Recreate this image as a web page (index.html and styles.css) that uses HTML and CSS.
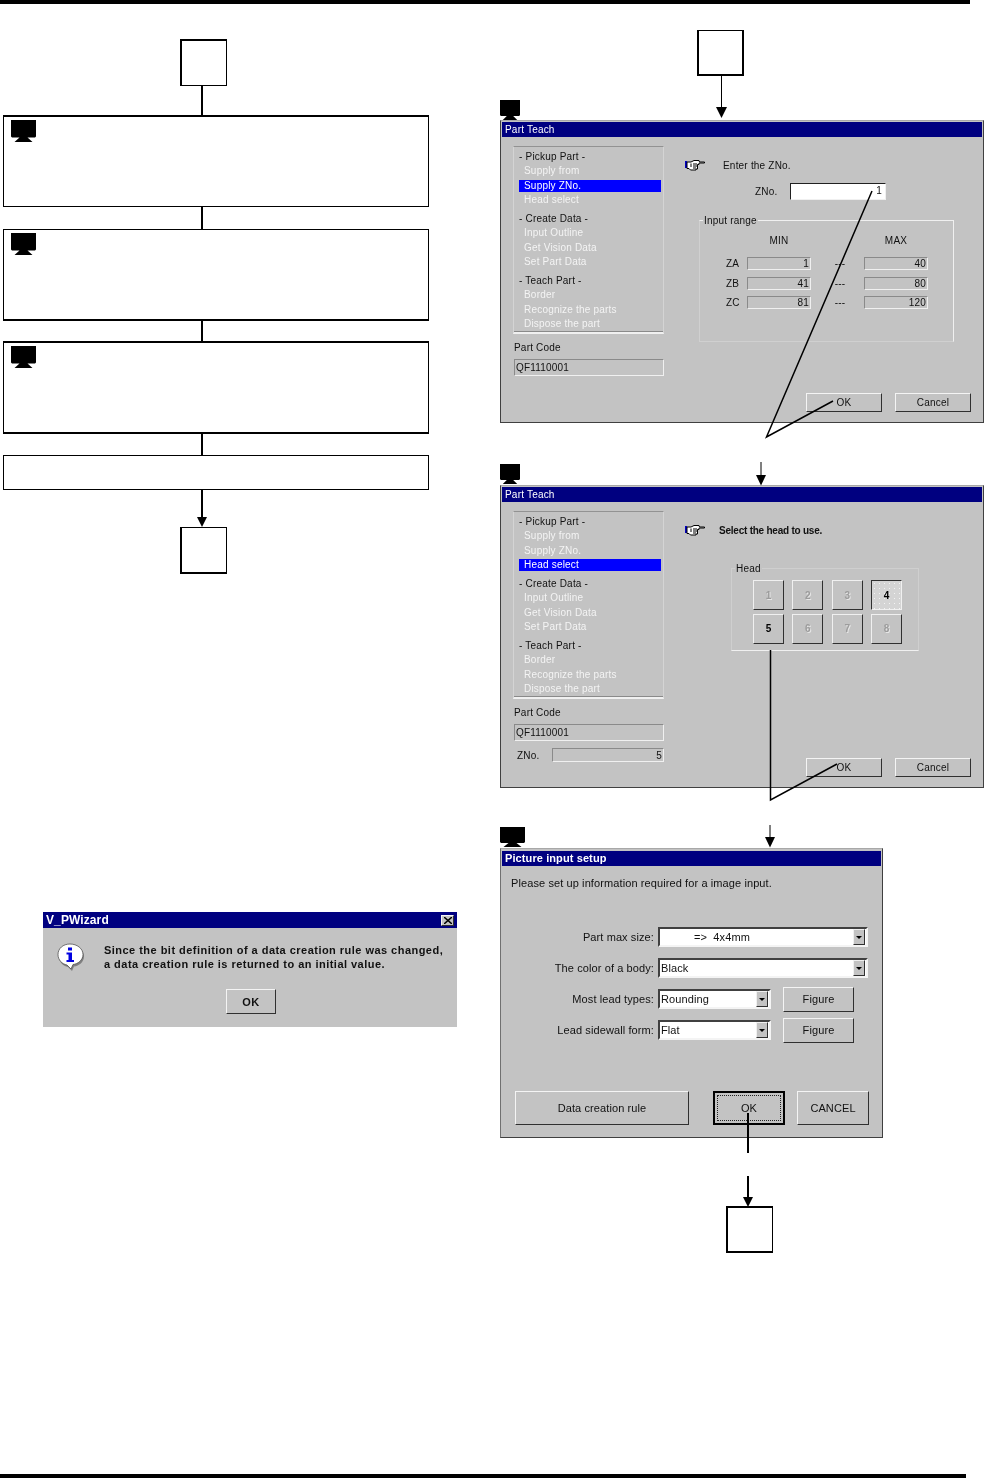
FILE: index.html
```html
<!DOCTYPE html>
<html lang="en">
<head>
  <meta charset="UTF-8" />
  <title>Part Teach flow</title>
  <link rel="stylesheet" href="styles.css">
</head>
<body>
<svg class="defs" width="0" height="0">
  <symbol id="monitor" viewBox="0 0 25 22" preserveAspectRatio="none">
    <path d="M0 0H25V16.5L24 17.5H16.5L21.5 22H3.5L8.5 17.5H1L0 16.5Z"/>
  </symbol>
  <symbol id="hand" viewBox="0 0 20 11">
    <rect x="0" y="1" width="2" height="7" fill="#0000c0"/>
    <path d="M2 2H6L9 0.5H14L14.5 2H19.5V3H14V4.5H12.5V9H11V10H5.5L4 8.5H2Z" fill="#fff" stroke="#000" stroke-width="1"/>
    <path d="M6 3.5V7M8 4H12M8 6H12M8 8H11" fill="none" stroke="#000" stroke-width="1"/>
  </symbol>
  <symbol id="info" viewBox="0 0 28 28">
    <path d="M14 3C21 3 27 7.500 27 13.500C27 19 22 23 17 23.500L15 28L11 24C6 23 2 19 2 13.500C2 7.500 7 3 14 3Z" fill="#808080"/>
    <path d="M13 1C20 1 26 5.500 26 11.500C26 17 21 21 16 21.500L14 26L10 22C5 21 1 17 1 11.500C1 5.500 6 1 13 1Z" fill="#fff" stroke="#404040" stroke-width=".7"/>
    <rect x="11" y="4.500" width="4" height="3" fill="#0000e0"/>
    <path d="M9.500 9.500H15V17H17V19H9.500V17H11.500V11.500H9.500Z" fill="#0000e0"/>
  </symbol>
</svg>

<div class="page">
  <div class="rule rule-top"></div>

  <!-- left flow chart -->
  <div class="node node-a"></div>
  <div class="step step-1"><svg class="monitor"><use href="#monitor"/></svg></div>
  <div class="step step-2"><svg class="monitor"><use href="#monitor"/></svg></div>
  <div class="step step-3"><svg class="monitor"><use href="#monitor"/></svg></div>
  <div class="step step-4"></div>
  <div class="node node-b"></div>

  <!-- message box -->
  <div class="window msgbox">
    <div class="titlebar msgbox-title">
      <span>V_PWizard</span>
      <span class="close"><svg width="8" height="7" viewBox="0 0 8 7"><path d="M0 0L8 7M8 0L0 7" stroke="#000" stroke-width="1.500"/></svg></span>
    </div>
    <div class="msgbox-row">
      <svg class="info-icon"><use href="#info"/></svg>
      <p class="msgbox-text">Since the bit definition of a data creation rule was changed,<br>a data creation rule is returned to an initial value.</p>
    </div>
    <button class="btn msgbox-ok">OK</button>
  </div>

  <!-- right column -->
  <div class="node node-c"></div>
  <svg class="monitor monitor-1"><use href="#monitor"/></svg>

  <div class="window teach teach-1">
    <div class="titlebar">Part Teach</div>
    <div class="teach-main">
      <div class="teach-left">
        <div class="steps">
          <div class="steps-group">
            <div class="steps-head">- Pickup Part -</div>
            <div class="steps-item">Supply from</div>
            <div class="steps-item sel">Supply ZNo.</div>
            <div class="steps-item">Head select</div>
          </div>
          <div class="steps-group">
            <div class="steps-head">- Create Data -</div>
            <div class="steps-item">Input Outline</div>
            <div class="steps-item">Get Vision Data</div>
            <div class="steps-item">Set Part Data</div>
          </div>
          <div class="steps-group">
            <div class="steps-head">- Teach Part -</div>
            <div class="steps-item">Border</div>
            <div class="steps-item">Recognize the parts</div>
            <div class="steps-item">Dispose the part</div>
          </div>
        </div>
        <div class="code-label">Part Code</div>
        <div class="field code-field">QF1110001</div>
      </div>
      <div class="teach-right">
        <div class="prompt">
          <svg class="hand"><use href="#hand"/></svg>
          <span>Enter the ZNo.</span>
        </div>
        <div class="zno-row">
          <span class="zno-label">ZNo.</span>
          <div class="zno-input">1</div>
        </div>
        <div class="range">
          <span class="legend">Input range</span>
          <div class="range-grid">
            <span></span><span class="range-head">MIN</span><span></span><span class="range-head">MAX</span>
            <span>ZA</span><div class="field num">1</div><span class="dash">---</span><div class="field num">40</div>
            <span>ZB</span><div class="field num">41</div><span class="dash">---</span><div class="field num">80</div>
            <span>ZC</span><div class="field num">81</div><span class="dash">---</span><div class="field num">120</div>
          </div>
        </div>
        <div class="teach-buttons">
          <button class="btn">OK</button>
          <button class="btn">Cancel</button>
        </div>
      </div>
    </div>
  </div>

  <svg class="monitor monitor-2"><use href="#monitor"/></svg>

  <div class="window teach teach-2">
    <div class="titlebar">Part Teach</div>
    <div class="teach-main">
      <div class="teach-left">
        <div class="steps">
          <div class="steps-group">
            <div class="steps-head">- Pickup Part -</div>
            <div class="steps-item">Supply from</div>
            <div class="steps-item">Supply ZNo.</div>
            <div class="steps-item sel">Head select</div>
          </div>
          <div class="steps-group">
            <div class="steps-head">- Create Data -</div>
            <div class="steps-item">Input Outline</div>
            <div class="steps-item">Get Vision Data</div>
            <div class="steps-item">Set Part Data</div>
          </div>
          <div class="steps-group">
            <div class="steps-head">- Teach Part -</div>
            <div class="steps-item">Border</div>
            <div class="steps-item">Recognize the parts</div>
            <div class="steps-item">Dispose the part</div>
          </div>
        </div>
        <div class="code-label">Part Code</div>
        <div class="field code-field">QF1110001</div>
        <div class="zno-summary">
          <span>ZNo.</span>
          <div class="field num zno-value">5</div>
        </div>
      </div>
      <div class="teach-right">
        <div class="prompt prompt-bold">
          <svg class="hand"><use href="#hand"/></svg>
          <span>Select the head to use.</span>
        </div>
        <div class="heads">
          <span class="legend">Head</span>
          <div class="heads-grid">
            <button class="head">1</button>
            <button class="head">2</button>
            <button class="head">3</button>
            <button class="head head-down">4</button>
            <button class="head head-on">5</button>
            <button class="head">6</button>
            <button class="head">7</button>
            <button class="head">8</button>
          </div>
        </div>
        <div class="teach-buttons">
          <button class="btn">OK</button>
          <button class="btn">Cancel</button>
        </div>
      </div>
    </div>
  </div>

  <svg class="monitor monitor-3"><use href="#monitor"/></svg>

  <div class="window setup">
    <div class="titlebar setup-title">Picture input setup</div>
    <div class="setup-body">
      <p class="setup-intro">Please set up information required for a image input.</p>
      <div class="setup-form">
        <div class="setup-row">
          <label>Part max size:</label>
          <div class="combo combo-wide"><span class="combo-text combo-indent">=&gt;&nbsp; 4x4mm</span><span class="combo-arrow"></span></div>
        </div>
        <div class="setup-row">
          <label>The color of a body:</label>
          <div class="combo combo-wide"><span class="combo-text">Black</span><span class="combo-arrow"></span></div>
        </div>
        <div class="setup-row">
          <label>Most lead types:</label>
          <div class="combo"><span class="combo-text">Rounding</span><span class="combo-arrow"></span></div>
          <button class="btn btn-figure">Figure</button>
        </div>
        <div class="setup-row">
          <label>Lead sidewall form:</label>
          <div class="combo"><span class="combo-text">Flat</span><span class="combo-arrow"></span></div>
          <button class="btn btn-figure">Figure</button>
        </div>
      </div>
      <div class="setup-buttons">
        <button class="btn btn-rule">Data creation rule</button>
        <button class="btn btn-default"><span>OK</span></button>
        <button class="btn btn-cancel">CANCEL</button>
      </div>
    </div>
  </div>

  <div class="node node-d"></div>

  <!-- connectors sit on top of the windows -->
  <svg class="wires" width="984" height="1478" viewBox="0 0 984 1478">
    <g stroke="#000" stroke-width="2" fill="none">
      <path d="M202 86V115M202 207V229M202 321V341M202 434V455M202 490V519"/>
      <path d="M748 1113V1153M748 1176V1199"/>
      <path d="M770.500 650V800L837 764" stroke-width="1.500"/>
      <path d="M872 191L766.500 437L833 401" stroke-width="1.500"/>
      <path d="M721.500 76V108M761 462V476M770 825V838" stroke-width="1"/>
    </g>
    <path d="M197 517H207L202 527Z"/>
    <path d="M716 107H727L721.500 118Z"/>
    <path d="M756 475H766L761 485.500Z"/>
    <path d="M765 837H775L770 847.500Z"/>
    <path d="M743 1197H753L748 1207Z"/>
  </svg>

  <div class="rule rule-bottom"></div>
</div>
</body>
</html>
```

FILE: styles.css
```css
* {
  box-sizing: border-box;
}
body {
  margin: 0;
  background: white;
  font-family: "Liberation Sans", Arial, sans-serif;
}
.defs {
  position: absolute;
}
.page {
  position: relative;
  width: 984px;
  height: 1478px;
  overflow: hidden;
}
.rule {
  position: absolute;
  left: 0;
  background: black;
}
.rule-top {
  top: 0;
  width: 970px;
  height: 4px;
}
.rule-bottom {
  top: 1474px;
  width: 966px;
  height: 4px;
}

/* flow chart nodes */
.node {
  position: absolute;
  width: 47px;
  height: 47px;
  border: 2px solid black;
}
.node-a {
  left: 180px;
  top: 39px;
  border-right-width: 1px;
  border-bottom-width: 1px;
}
.node-b {
  left: 180px;
  top: 527px;
  border-top-width: 1px;
  border-right-width: 1px;
}
.node-c {
  left: 697px;
  top: 30px;
  height: 46px;
  border-top-width: 1px;
}
.node-d {
  left: 726px;
  top: 1206px;
  border-right-width: 1px;
}
.step {
  position: absolute;
  left: 3px;
  width: 426px;
  border: 1px solid black;
  padding: 3px 7px;
}
.step-1 {
  top: 115px;
  height: 92px;
  border-top-width: 2px;
}
.step-2 {
  top: 229px;
  height: 92px;
  border-bottom-width: 2px;
}
.step-3 {
  top: 341px;
  height: 93px;
  border-top-width: 2px;
  border-bottom-width: 2px;
}
.step-4 {
  top: 455px;
  height: 35px;
}
.monitor {
  display: block;
  width: 25px;
  height: 22px;
}
.monitor-1,
.monitor-2,
.monitor-3 {
  position: absolute;
  left: 500px;
}
.monitor-1 {
  top: 100px;
  width: 20px;
  height: 20px;
}
.monitor-2 {
  top: 464px;
  width: 20px;
  height: 20px;
}
.monitor-3 {
  top: 827px;
  height: 20px;
}
.wires {
  position: absolute;
  left: 0;
  top: 0;
}

/* windows */
.window {
  position: absolute;
  display: flex;
  flex-direction: column;
  background: #c3c3c3;
  color: #111;
  font-size: 10px;
  letter-spacing: 0.2px;
  filter: blur(0.3px);
}
.titlebar {
  background: #000080;
  color: white;
  flex: none;
}
.btn {
  font: inherit;
  letter-spacing: inherit;
  color: #111;
  background: #c3c3c3;
  padding: 0;
  border: 1px solid;
  border-color: #f4f4f4 #303030 #303030 #f4f4f4;
}
.field {
  border: 1px solid;
  border-color: #8a8a8a #f0f0f0 #f0f0f0 #8a8a8a;
  display: flex;
  align-items: center;
}
.num {
  justify-content: flex-end;
  padding-right: 1px;
}

/* Part Teach */
.teach {
  left: 500px;
  width: 484px;
  height: 303px;
  padding: 1px 1px 1px 1px;
  border: 1px solid #404040;
  border-top-color: #a8a8a8;
}
.teach-1 {
  top: 120px;
}
.teach-2 {
  top: 485px;
}
.teach .titlebar {
  height: 15px;
  line-height: 15px;
  padding-left: 3px;
}
.teach-main {
  flex: 1;
  display: grid;
  grid-template-columns: 151px 1fr;
  padding: 9px 11px 9px 11px;
}
.teach-left {
  display: flex;
  flex-direction: column;
}
.steps {
  height: 188px;
  display: flex;
  flex-direction: column;
  gap: 6.5px;
  padding: 3.5px 2px 0 5px;
  border: 1px solid #d4d4d4;
  border-top-color: #929292;
  border-bottom: 2px solid #f0f0f0;
  box-shadow: 0 -1px 0 #8a8a8a inset;
}
.steps-group {
  display: flex;
  flex-direction: column;
  gap: 2.5px;
}
.steps-head,
.steps-item {
  height: 12px;
  line-height: 12px;
}
.steps-item {
  padding-left: 5px;
  color: #f4f4f4;
}
.steps-item.sel {
  background: #0000ff;
  color: white;
}
.code-label {
  height: 12px;
  line-height: 12px;
  margin: 8px 0 5px 1px;
}
.code-field {
  height: 17px;
  margin-left: 1px;
  padding-left: 1px;
}
.zno-summary {
  display: flex;
  align-items: center;
  justify-content: space-between;
  margin: 7px 0 0 4px;
  height: 14px;
}
.zno-value {
  width: 112px;
  height: 14px;
}
.teach-right {
  display: flex;
  flex-direction: column;
}
.prompt {
  display: flex;
  align-items: center;
  gap: 18px;
  height: 12px;
  margin: 13px 0 0 21px;
}
.prompt-bold {
  gap: 14px;
  font-weight: bold;
  letter-spacing: -0.23px;
}
.hand {
  width: 20px;
  height: 11px;
}
.zno-row {
  display: flex;
  align-items: center;
  height: 17px;
  margin: 12px 0 0 91px;
}
.zno-label {
  width: 35px;
}
.zno-input {
  width: 96px;
  height: 17px;
  background: white;
  border: 1px solid;
  border-color: #202020 #f0f0f0 #f0f0f0 #202020;
  text-align: right;
  line-height: 13px;
  padding-right: 3px;
}
.range,
.heads {
  position: relative;
  border: 1px solid #d0d0d0;
  border-top-color: #f0f0f0;
}
.range {
  width: 255px;
  height: 122px;
  margin: 20px 0 0 35px;
  border-color: #f0f0f0;
  border-left-color: #d0d0d0;
  border-bottom-color: #d0d0d0;
}
.legend {
  position: absolute;
  top: -6px;
  left: 3px;
  height: 12px;
  line-height: 12px;
  padding: 0 1px;
  background: #c3c3c3;
}
.range-grid {
  display: grid;
  grid-template-columns: 21px 64px 53px 64px;
  grid-template-rows: 15.5px 13px 13px 13px;
  row-gap: 6.5px;
  align-items: center;
  padding: 14px 0 0 26px;
}
.range-grid .field {
  height: 13px;
}
.range-head {
  text-align: center;
  align-self: start;
}
.dash {
  text-align: center;
  padding-left: 5px;
}
.heads {
  width: 188px;
  height: 83px;
  margin: 32px 0 0 67px;
  border-color: #cfcfcf;
  border-bottom: 1px solid #f0f0f0;
}
.heads-grid {
  display: grid;
  grid-template-columns: repeat(4, 31px);
  grid-template-rows: 30px 30px;
  column-gap: 8.33px;
  row-gap: 3.5px;
  padding: 11px 0 0 21px;
}
.head {
  font: inherit;
  font-weight: bold;
  padding: 0;
  color: #9c9c9c;
  background: #c3c3c3;
  border: 1px solid;
  border-color: #f0f0f0 #303030 #303030 #f0f0f0;
  text-shadow: 1px 1px 0 #e6e6e6;
}
.head-on {
  color: black;
  text-shadow: none;
}
.head-down {
  color: black;
  text-shadow: none;
  border-color: #303030 #f0f0f0 #f0f0f0 #303030;
  background-color: #d4d4d4;
  background-image: radial-gradient(circle, #f4f4f4 0.8px, transparent 1px);
  background-size: 5px 5px;
}
.teach-buttons {
  display: flex;
  justify-content: flex-end;
  gap: 13px;
  margin-top: auto;
}
.teach-buttons .btn {
  width: 76px;
  height: 19px;
}

/* message box */
.msgbox {
  left: 43px;
  top: 912px;
  width: 414px;
  height: 115px;
  font-size: 11px;
  font-weight: bold;
  letter-spacing: 0.47px;
}
.msgbox-title {
  height: 16px;
  padding: 0 3px 0 3px;
  line-height: 16px;
  display: flex;
  justify-content: space-between;
  align-items: center;
  font-size: 12px;
  letter-spacing: 0.1px;
}
.close {
  display: flex;
  align-items: center;
  justify-content: center;
  width: 13px;
  height: 11px;
  background: #c3c3c3;
  border: 1px solid;
  border-color: #f4f4f4 #303030 #303030 #f4f4f4;
}
.msgbox-row {
  display: flex;
  gap: 19px;
  margin: 15px 0 0 14px;
}
.info-icon {
  flex: none;
  width: 28px;
  height: 28px;
}
.msgbox-text {
  margin: 0;
  line-height: 14px;
}
.msgbox-ok {
  align-self: center;
  width: 50px;
  height: 25px;
  margin: 18px 0 0 2px;
}

/* Picture input setup */
.setup {
  left: 500px;
  top: 848px;
  width: 383px;
  height: 290px;
  padding: 2px 1px 1px 1px;
  border: 1px solid #404040;
  border-top-color: #a8a8a8;
  border-left-color: #707070;
  font-size: 11px;
  letter-spacing: 0.1px;
}
.setup-title {
  height: 15px;
  line-height: 15px;
  padding-left: 3px;
  font-weight: bold;
  letter-spacing: 0.1px;
}
.setup-body {
  flex: 1;
  display: flex;
  flex-direction: column;
  padding: 11px 12px 11px 9px;
}
.setup-intro {
  margin: 0;
  height: 12px;
  line-height: 12px;
}
.setup-form {
  display: flex;
  flex-direction: column;
  gap: 11px;
  margin-top: 38px;
}
.setup-row {
  display: flex;
  align-items: center;
  height: 20px;
}
.setup-row label {
  width: 143px;
  text-align: right;
  margin-right: 4px;
  flex: none;
}
.combo {
  width: 113px;
  height: 20px;
  flex: none;
  display: flex;
  align-items: center;
  justify-content: space-between;
  background: white;
  border: 2px solid;
  border-color: #404040 #f4f4f4 #f4f4f4 #404040;
  padding-right: 1px;
}
.combo-wide {
  width: 210px;
}
.combo-text {
  padding-left: 1px;
}
.combo-indent {
  padding-left: 34px;
}
.combo-arrow {
  width: 12px;
  height: 16px;
  background: #c3c3c3;
  border: 1px solid;
  border-color: #f0f0f0 #303030 #303030 #f0f0f0;
  position: relative;
}
.combo-arrow::after {
  content: "";
  position: absolute;
  left: 2px;
  top: 6px;
  border: 3px solid transparent;
  border-top: 3px solid black;
  border-bottom: 0;
}
.btn-figure {
  width: 71px;
  height: 25px;
  margin-left: 12px;
  flex: none;
}
.setup-buttons {
  display: flex;
  margin-top: auto;
  padding-left: 4px;
}
.setup-buttons .btn {
  height: 34px;
}
.btn-rule {
  width: 174px;
}
.btn-default {
  width: 72px;
  margin-left: 24px;
  padding: 2px;
  border: 2px solid black;
}
.btn-default span {
  display: flex;
  align-items: center;
  justify-content: center;
  height: 100%;
  border: 1px dotted #222;
}
.btn-cancel {
  width: 72px;
  margin-left: 12px;
}
```
